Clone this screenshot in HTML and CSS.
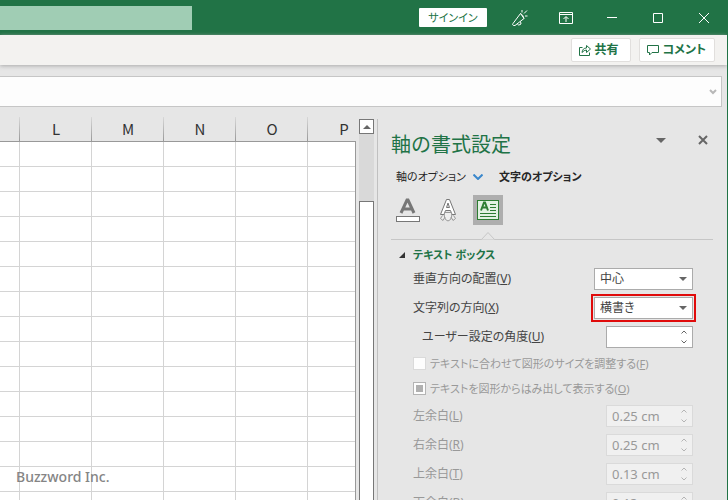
FILE: index.html
```html
<!DOCTYPE html>
<html lang="ja">
<head>
<meta charset="utf-8">
<title>軸の書式設定</title>
<link rel="stylesheet" href="styles.css">
</head>
<body>
<div class="window">
  <header class="titlebar">
    <input class="search" type="search" aria-label="検索">
    <div class="window-tools">
      <button class="signin" type="button">サインイン</button>
      <button class="tool" type="button" aria-label="新機能">
        <svg width="18" height="18" viewBox="0 0 18 18"><path d="M9.500 4.500 2 14.500Q1 16 2.500 16.500L4 16.500 13 9.500ZM9.500 4.500Q12 5.500 13 9.500M6 14.500Q7.500 17.500 10 15L9.500 12.500M11 3.500V1M13 4.500 16 1.500M14 7H16.500"/></svg>
      </button>
      <button class="tool" type="button" aria-label="リボンの表示オプション">
        <svg width="14" height="12" viewBox="0 0 14 12"><path d="M.5.5H13.500V11.500H.5ZM.5 2.500H13.500M7 10V5M4.500 7 7 4.500 9.500 7"/></svg>
      </button>
      <button class="tool" type="button" aria-label="最小化">
        <svg width="10" height="10" viewBox="0 0 10 10"><path d="M0 4.500H10"/></svg>
      </button>
      <button class="tool" type="button" aria-label="最大化">
        <svg width="10" height="10" viewBox="0 0 10 10"><path d="M.5.5H9.500V9.500H.5Z"/></svg>
      </button>
      <button class="tool" type="button" aria-label="閉じる">
        <svg width="10" height="10" viewBox="0 0 10 10"><path d="M0 0 10 10M10 0 0 10"/></svg>
      </button>
    </div>
  </header>

  <div class="ribbon">
    <button class="ribbon-button" type="button">
      <svg width="12" height="12" viewBox="0 0 12 12"><path d="M3.500 3.500H.5V11.500H10.500V8.500M3 8.500Q3.500 4 7.500 4V1.500L11.500 5 7.500 8.500V6Q5 6 3 8.500Z"/></svg>
      <span>共有</span>
    </button>
    <button class="ribbon-button" type="button">
      <svg width="12" height="12" viewBox="0 0 12 12"><path d="M.5 1.500H11.500V8.500H5L2.500 11V8.500H.5Z"/></svg>
      <span>コメント</span>
    </button>
  </div>

  <div class="formula-row">
    <div class="formula">
      <input class="formula-input" type="text" aria-label="数式バー">
      <button class="formula-toggle" type="button" aria-label="数式バーの展開">
        <svg width="8" height="6" viewBox="0 0 8 6"><path d="M1 1 4 4 7 1"/></svg>
      </button>
    </div>
  </div>

  <main class="workspace">
    <div class="sheet">
      <table class="grid">
        <thead>
          <tr><th class="cut"></th><th>L</th><th>M</th><th>N</th><th>O</th><th>P</th></tr>
        </thead>
        <tbody>
          <tr><td></td><td></td><td></td><td></td><td></td><td></td></tr>
          <tr><td></td><td></td><td></td><td></td><td></td><td></td></tr>
          <tr><td></td><td></td><td></td><td></td><td></td><td></td></tr>
          <tr><td></td><td></td><td></td><td></td><td></td><td></td></tr>
          <tr><td></td><td></td><td></td><td></td><td></td><td></td></tr>
          <tr><td></td><td></td><td></td><td></td><td></td><td></td></tr>
          <tr><td></td><td></td><td></td><td></td><td></td><td></td></tr>
          <tr><td></td><td></td><td></td><td></td><td></td><td></td></tr>
          <tr><td></td><td></td><td></td><td></td><td></td><td></td></tr>
          <tr><td></td><td></td><td></td><td></td><td></td><td></td></tr>
          <tr><td></td><td></td><td></td><td></td><td></td><td></td></tr>
          <tr><td></td><td></td><td></td><td></td><td></td><td></td></tr>
          <tr><td></td><td></td><td></td><td></td><td></td><td></td></tr>
          <tr><td></td><td></td><td></td><td></td><td></td><td></td></tr>
          <tr><td></td><td></td><td></td><td></td><td></td><td></td></tr>
        </tbody>
      </table>
    </div>

    <div class="scrollbar">
      <button class="scroll-up" type="button" aria-label="上へスクロール">
        <svg width="8" height="4" viewBox="0 0 8 4"><path d="M0 4 4 0 8 4Z"/></svg>
      </button>
      <div class="scroll-track"></div>
      <div class="scroll-thumb"></div>
    </div>

    <aside class="pane">
      <div class="pane-head">
        <h1>軸の書式設定</h1>
        <button class="pane-menu" type="button" aria-label="作業ウィンドウのオプション">
          <svg width="10" height="5" viewBox="0 0 10 5"><path d="M0 0H10L5 5Z"/></svg>
        </button>
        <button class="pane-close" type="button" aria-label="閉じる">
          <svg width="10" height="10" viewBox="0 0 10 10"><path d="M1 1 9 9M9 1 1 9"/></svg>
        </button>
      </div>

      <div class="tabs">
        <button class="tab" type="button">軸のオプション
          <svg width="10" height="6" viewBox="0 0 10 6"><path d="M.5.5 5 5 9.500.5"/></svg>
        </button>
        <button class="tab selected" type="button">文字のオプション</button>
      </div>

      <div class="icon-tabs">
        <button class="icon-tab" type="button" aria-label="文字の塗りつぶしと輪郭">
          <svg width="30" height="30" viewBox="0 0 30 30">
            <path class="glyph" d="M8 18 14 5H15L21 18M10 14H19"/>
            <rect class="swatch" x="3.500" y="21.500" width="23" height="5"/>
          </svg>
        </button>
        <button class="icon-tab" type="button" aria-label="文字の効果">
          <svg width="30" height="30" viewBox="0 0 30 30">
            <path class="outline" d="M13.500 4.500H16.500L22.500 19.500H19L17.500 15.500H12.500L11 19.500H7.500ZM15 8 13.500 12.500H16.500Z"/>
            <path class="mirror" d="M9.500 20.500 7.500 23.500 10 25.500 12 22M20.500 20.500 22.500 23.500 20 25.500 18 22M11.500 17.500Q10.500 21 12.500 24.500L15 26 17.500 24.500Q19.500 21 18.500 17.500Z"/>
          </svg>
        </button>
        <button class="icon-tab active" type="button" aria-label="テキスト ボックス">
          <svg width="30" height="30" viewBox="0 0 30 30">
            <rect class="sheet-icon" x="4.500" y="5.500" width="21" height="19"/>
            <path class="letter" d="M8 15.500 11 7.500H12L15 15.500M9.500 12.500H13.500"/>
            <path class="green-line" d="M17 9.500H23M17 12.500H23M17 15.500H23M7 18.500H23M7 21.500H23"/>
          </svg>
        </button>
      </div>

      <div class="divider">
        <svg width="14" height="9" viewBox="0 0 14 9"><path d="M.5 8.500 7 1.500 13.500 8.500"/></svg>
      </div>

      <section class="options">
        <h2>
          <svg width="6" height="6" viewBox="0 0 6 6"><path d="M6 0V6H0Z"/></svg>
          テキスト ボックス
        </h2>

        <div class="row">
          <label for="valign">垂直方向の配置(<u>V</u>)</label>
          <div class="select-box">
            <select id="valign"><option>中心</option></select>
            <svg width="8" height="4" viewBox="0 0 8 4"><path d="M0 0H8L4 4Z"/></svg>
          </div>
        </div>
        <div class="row">
          <label for="direction">文字列の方向(<u>X</u>)</label>
          <div class="select-box highlighted">
            <select id="direction"><option>横書き</option></select>
            <svg width="8" height="4" viewBox="0 0 8 4"><path d="M0 0H8L4 4Z"/></svg>
          </div>
        </div>
        <div class="row sub">
          <label for="angle">ユーザー設定の角度(<u>U</u>)</label>
          <div class="spin">
            <input id="angle" type="text">
            <svg width="6" height="14" viewBox="0 0 6 14"><path d="M.5 3.500 3 1 5.500 3.500M.5 10.500 3 13 5.500 10.500"/></svg>
          </div>
        </div>

        <div class="checks">
          <label class="check"><input type="checkbox" disabled><span>テキストに合わせて図形のサイズを調整する(<u>F</u>)</span></label>
          <label class="check"><input class="mixed" type="checkbox" disabled><span>テキストを図形からはみ出して表示する(<u>O</u>)</span></label>
        </div>

        <div class="row off">
          <label for="left">左余白(<u>L</u>)</label>
          <div class="spin">
            <input id="left" type="text" value="0.25 cm" disabled>
            <svg width="6" height="14" viewBox="0 0 6 14"><path d="M.5 3.500 3 1 5.500 3.500M.5 10.500 3 13 5.500 10.500"/></svg>
          </div>
        </div>
        <div class="row off">
          <label for="right">右余白(<u>R</u>)</label>
          <div class="spin">
            <input id="right" type="text" value="0.25 cm" disabled>
            <svg width="6" height="14" viewBox="0 0 6 14"><path d="M.5 3.500 3 1 5.500 3.500M.5 10.500 3 13 5.500 10.500"/></svg>
          </div>
        </div>
        <div class="row off">
          <label for="top">上余白(<u>T</u>)</label>
          <div class="spin">
            <input id="top" type="text" value="0.13 cm" disabled>
            <svg width="6" height="14" viewBox="0 0 6 14"><path d="M.5 3.500 3 1 5.500 3.500M.5 10.500 3 13 5.500 10.500"/></svg>
          </div>
        </div>
        <div class="row off">
          <label for="bottom">下余白(<u>B</u>)</label>
          <div class="spin">
            <input id="bottom" type="text" value="0.13 cm" disabled>
            <svg width="6" height="14" viewBox="0 0 6 14"><path d="M.5 3.500 3 1 5.500 3.500M.5 10.500 3 13 5.500 10.500"/></svg>
          </div>
        </div>
      </section>
    </aside>
  </main>
  <div class="watermark">Buzzword Inc.</div>
</div>
</body>
</html>
```
FILE: styles.css
```css
* {
  box-sizing: border-box;
}

body {
  margin: 0;
  background: #e6e6e6;
  color: #444;
  font-family: "Noto Sans", "Noto Sans CJK JP", sans-serif;
  font-size: 12px;
  line-height: 16px;
  font-feature-settings: "palt";
}

button,
input,
select {
  margin: 0;
  padding: 0;
  border: 0;
  border-radius: 0;
  background: none;
  color: inherit;
  font: inherit;
  font-feature-settings: inherit;
  appearance: none;
}

svg {
  display: block;
  flex: none;
  fill: none;
  stroke: currentColor;
}

.window {
  position: relative;
  display: flex;
  flex-direction: column;
  height: 100vh;
  overflow: hidden;
  border-right: 1px solid #217346;
}

/* Title bar */
.titlebar {
  display: flex;
  flex: none;
  align-items: center;
  justify-content: space-between;
  height: 35px;
  background: #217346;
  color: #fff;
}

.search {
  width: 192px;
  height: 24px;
  background: #a0cdb4;
}

.window-tools {
  display: flex;
  align-items: center;
}

.signin {
  width: 68px;
  height: 19px;
  margin-right: 10px;
  border-radius: 1px;
  background: #fff;
  color: #217346;
  font-size: 11px;
}

.tool {
  display: flex;
  align-items: center;
  justify-content: center;
  width: 46px;
  height: 35px;
}

/* Ribbon */
.ribbon {
  z-index: 1;
  display: flex;
  flex: none;
  justify-content: flex-end;
  gap: 8px;
  height: 30px;
  padding: 3px 12px;
  background: #f3f2f0;
  box-shadow: 0 1px 4px #aaa;
}

.ribbon-button {
  display: flex;
  align-items: center;
  gap: 4px;
  min-width: 60px;
  padding: 0 8px 0 7px;
  border: 1px solid #e1dfdd;
  border-radius: 2px;
  background: #fff;
  color: #217346;
  font-size: 12px;
  font-weight: 700;
}

/* Formula bar */
.formula-row {
  flex: none;
  padding: 11px 5px 0 0;
}

.formula {
  display: flex;
  height: 31px;
  border: 1px solid #c6c6c6;
  border-left: 0;
  background: #fdfdfd;
}

.formula-input {
  flex: 1;
}

.formula-toggle {
  padding: 0 4px;
  color: #b8b8b8;
}

.formula-toggle svg {
  stroke-width: 2;
}

/* Worksheet */
.workspace {
  display: flex;
  flex: 1;
  min-height: 0;
  padding-top: 10px;
}

.sheet {
  flex: 1;
  min-width: 0;
  overflow: hidden;
}

.grid {
  width: 380px;
  border-collapse: separate;
  border-spacing: 0;
  table-layout: fixed;
}

.grid th {
  width: 72px;
  height: 25px;
  padding: 0;
  border-bottom: 1px solid #999;
  background: linear-gradient(#d8d8d8, #999) right / 1px 100% no-repeat;
  font-family: "Noto Sans CJK JP", sans-serif;
  font-size: 15px;
  line-height: 22px;
  font-weight: 400;
  color: #333;
}

.grid .cut {
  width: 20px;
}

.grid td {
  height: 25px;
  padding: 0;
  border-right: 1px solid #d4d4d4;
  border-bottom: 1px solid #d4d4d4;
  background: #fff;
}

/* Scroll bar */
.scrollbar {
  display: flex;
  flex: none;
  flex-direction: column;
  width: 22px;
  padding: 2px 3px 0 4px;
  background: linear-gradient(#999, #999) 0 24px / 1px 100% no-repeat;
}

.scroll-up {
  display: flex;
  flex: none;
  align-items: center;
  justify-content: center;
  height: 15px;
  border: 1px solid #777;
  background: #fff;
  color: #666;
}

.scroll-up svg,
.pane-menu svg,
.select-box svg,
h2 svg {
  fill: currentColor;
  stroke: none;
}

.scroll-track {
  flex: none;
  height: 67px;
  background: #d9d9d9;
}

.scroll-thumb {
  flex: 1;
  border: 1px solid #777;
  border-bottom: 0;
  background: #fff;
}

/* Format pane */
.pane {
  flex: none;
  width: 350px;
  margin-top: 2px;
  padding: 13px 14px 0 13px;
  border-left: 1px solid #c0c0c0;
}

.pane-head {
  display: flex;
  align-items: center;
  height: 26px;
}

h1 {
  flex: 1;
  margin: 0;
  color: #217346;
  font-size: 20px;
  line-height: 26px;
  font-weight: 400;
  font-feature-settings: normal;
}

.pane-menu,
.pane-close {
  display: flex;
  align-items: center;
  height: 10px;
  margin-bottom: 10px;
  color: #666;
}

.pane-close {
  margin: 0 5px 10px 32px;
}

.pane-close svg {
  stroke-width: 2;
}

.tabs {
  display: flex;
  gap: 16px;
  margin-top: 11px;
  padding-left: 5px;
}

.tab {
  display: flex;
  align-items: center;
  gap: 7px;
  height: 16px;
  color: #262626;
  font-size: 11px;
}

.tab svg {
  color: #3a87cc;
  stroke-width: 2;
}

.selected {
  font-weight: 700;
}

.icon-tabs {
  display: flex;
  gap: 10px;
  margin: 10px 0 0 2px;
}

.icon-tab {
  width: 30px;
  height: 30px;
}

.active {
  background: #aeaeae;
}

.glyph {
  stroke: #777;
  stroke-width: 3;
}

.swatch {
  fill: #fff;
  stroke: #777;
}

.outline {
  fill: #fff;
  stroke: #777;
}

.mirror {
  fill: #eee;
  stroke: #999;
}

.sheet-icon {
  fill: #e2f2e2;
  stroke: #2d7d32;
}

.letter {
  stroke: #2d7d32;
  stroke-width: 2;
}

.green-line {
  stroke: #2d7d32;
}

.divider {
  height: 15px;
  padding: 6px 0 0 90px;
  border-bottom: 1px solid #c6c6c6;
}

.divider svg {
  position: relative;
  fill: #e6e6e6;
  stroke: #c6c6c6;
}

.options {
  padding: 7px 20px 0 22px;
}

h2 {
  display: flex;
  align-items: center;
  gap: 8px;
  margin: 0 0 5px -14px;
  color: #217346;
  font-size: 11px;
  line-height: 16px;
}

h2 svg {
  color: #333;
}

.row {
  display: flex;
  align-items: center;
  justify-content: space-between;
  height: 22px;
  margin-bottom: 7px;
}

.sub label {
  padding-left: 9px;
}

.select-box,
.spin {
  position: relative;
  height: 22px;
  border: 1px solid #ababab;
  background: #fff;
}

.select-box {
  width: 99px;
}

.highlighted {
  outline: 2px solid #e00b0b;
  outline-offset: 1px;
}

.select-box select,
.spin input {
  display: block;
  width: 100%;
  height: 20px;
  padding: 0 20px 0 5px;
}

.spin input {
  font-size: 13px;
}

.select-box svg,
.spin svg {
  position: absolute;
  top: 8px;
  right: 5px;
  color: #666;
  pointer-events: none;
}

.spin {
  width: 87px;
}

.spin svg {
  top: 3px;
}

.checks {
  margin: -4px 0 4px;
}

.check {
  display: flex;
  align-items: center;
  gap: 4px;
  height: 25px;
  color: #999;
  font-size: 11px;
  white-space: nowrap;
}

.check input {
  flex: none;
  width: 13px;
  height: 13px;
  border: 1px solid #dadada;
  background: #fdfdfd;
}

.check .mixed {
  border-color: #b4b4b4;
  background: linear-gradient(#b0b0b0, #b0b0b0) center / 7px 7px no-repeat #fdfdfd;
}

.off {
  color: #999;
}

.off .spin {
  border-color: #dadada;
  background: #f0f0f0;
}

.off .spin svg {
  color: #b4b4b4;
}

.watermark {
  position: absolute;
  bottom: 13px;
  left: 16px;
  color: #858585;
  font-size: 14px;
  line-height: 20px;
  font-weight: 500;
}
```
